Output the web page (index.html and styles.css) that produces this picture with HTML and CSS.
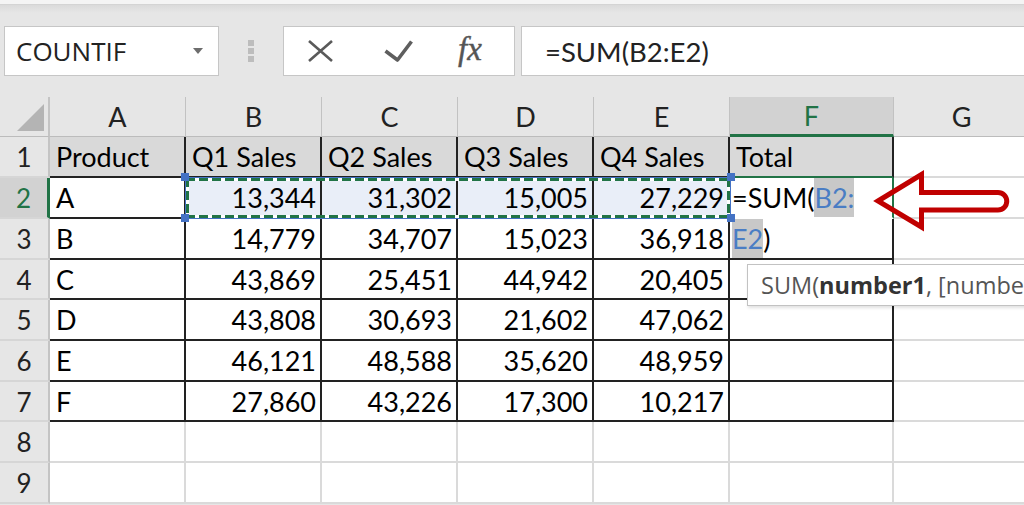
FILE: index.html
```html
<!DOCTYPE html>
<html>
<head>
<meta charset="utf-8">
<link rel="stylesheet" href="styles.css">
</head>
<body>
<div class="chrome">
  <div class="topstrip"></div>
  <div class="shade"></div>
  <div class="fbar">
    <div class="namebox"><span class="name">COUNTIF</span><span class="caret"></span></div>
    <div class="grip"><i></i><i></i><i></i></div>
    <div class="btns">
      <svg class="ico-x" width="25" height="22" viewBox="0 0 25 22"><path d="M1 1 L24 21 M24 1 L1 21" stroke="#5a5a5a" stroke-width="2.6" fill="none"/></svg>
      <svg class="ico-ok" width="29" height="22" viewBox="0 0 29 22"><path d="M1.5 11 L13.5 20 L27.5 1.5" stroke="#5e5e5e" stroke-width="3.6" fill="none" stroke-linejoin="round"/></svg>
      <span class="fx">fx</span>
    </div>
    <div class="formula">=SUM(B2:E2)</div>
  </div>
</div>
<div class="sheet">
  <div class="corner"><span class="tri"></span></div>
  <div class="ch">A</div><div class="ch">B</div><div class="ch">C</div><div class="ch">D</div><div class="ch">E</div><div class="ch sel">F</div><div class="ch">G</div>

  <div class="rh">1</div>
  <div class="c t hd">Product</div><div class="c t hd">Q1 Sales</div><div class="c t hd">Q2 Sales</div><div class="c t hd">Q3 Sales</div><div class="c t hd">Q4 Sales</div><div class="c t hd f1">Total</div><div class="c"></div>

  <div class="rh rsel">2</div>
  <div class="c t">A</div><div class="c t n insel">13,344</div><div class="c t n insel">31,302</div><div class="c t n insel">15,005</div><div class="c t n insel">27,229</div><div class="c t edit f2">=SUM(<span class="ref">B2:</span></div><div class="c"></div>

  <div class="rh">3</div>
  <div class="c t">B</div><div class="c t n">14,779</div><div class="c t n">34,707</div><div class="c t n">15,023</div><div class="c t n">36,918</div><div class="c t edit"><span class="ref">E2</span>)</div><div class="c"></div>

  <div class="rh">4</div>
  <div class="c t">C</div><div class="c t n">43,869</div><div class="c t n">25,451</div><div class="c t n">44,942</div><div class="c t n">20,405</div><div class="c t"></div><div class="c"></div>

  <div class="rh">5</div>
  <div class="c t">D</div><div class="c t n">43,808</div><div class="c t n">30,693</div><div class="c t n">21,602</div><div class="c t n">47,062</div><div class="c t"></div><div class="c"></div>

  <div class="rh">6</div>
  <div class="c t">E</div><div class="c t n">46,121</div><div class="c t n">48,588</div><div class="c t n">35,620</div><div class="c t n">48,959</div><div class="c t"></div><div class="c"></div>

  <div class="rh">7</div>
  <div class="c t">F</div><div class="c t n">27,860</div><div class="c t n">43,226</div><div class="c t n">17,300</div><div class="c t n">10,217</div><div class="c t"></div><div class="c"></div>

  <div class="rh">8</div>
  <div class="c"></div><div class="c"></div><div class="c"></div><div class="c"></div><div class="c"></div><div class="c"></div><div class="c"></div>

  <div class="rh">9</div>
  <div class="c"></div><div class="c"></div><div class="c"></div><div class="c"></div><div class="c"></div><div class="c"></div><div class="c"></div>

  <div class="range">
    <div class="ants"></div>
    <span class="h tl"></span><span class="h tr"></span><span class="h bl"></span><span class="h br"></span>
  </div>
</div>

<div class="tip">SUM(<b>number1</b>, [number2], ...)</div>

<svg class="arrow" width="1024" height="505" viewBox="0 0 1024 505">
  <path d="M878 201 L921.5 174.5 L921.5 192.5 L998 192.5 A8.75 8.75 0 0 1 998 210 L921.5 210 L921.5 227 Z" fill="none" stroke="#c00000" stroke-width="5" stroke-linejoin="miter"/>
</svg>
</body>
</html>
```

FILE: styles.css
```css
* { box-sizing: border-box; margin: 0; padding: 0; }
html, body { width: 1024px; height: 505px; overflow: hidden; }
body { background: #e6e6e6; font-family: "Lato", "Liberation Sans", sans-serif; color: #000; position: relative; }

.chrome { height: 97px; display: flex; flex-direction: column; }
.topstrip { height: 5px; background: #f4f4f4; border-bottom: 1px solid #d4d4d4; }
.shade { height: 8px; background: linear-gradient(#dadada, #e6e6e6); }
.fbar { display: flex; height: 50px; margin-top: 13px; }

.namebox { margin-left: 4px; width: 215px; background: #fff; border: 1px solid #c6c6c6; display: flex; align-items: center; padding-left: 11px; }
.name { font-family: "Open Sans", "Noto Sans", sans-serif; font-size: 26px; color: #222; }
.caret { margin-left: auto; margin-right: 15px; width: 0; height: 0; border-left: 5px solid transparent; border-right: 5px solid transparent; border-top: 6px solid #6d6d6d; }

.grip { margin-left: 29px; width: 6px; display: flex; flex-direction: column; justify-content: center; gap: 2px; }
.grip i { display: block; width: 6px; height: 6px; background: #bdbdbd; }

.btns { margin-left: 29px; width: 232px; background: #fff; border: 1px solid #c6c6c6; display: flex; align-items: center; padding-left: 24px; }
.ico-ok { margin-left: 51px; }
.fx { margin-left: 45px; font-family: "Liberation Serif", serif; font-style: italic; font-size: 33px; color: #555; line-height: 1; margin-top: -3px; -webkit-text-stroke: 0.4px #555; }

.formula { margin-left: 6px; flex: 1; margin-right: -20px; background: #fff; border: 1px solid #c6c6c6; display: flex; align-items: center; padding-left: 23px; font-size: 27.5px; color: #222; }

.sheet { display: grid; grid-template-columns: 50px 136px 136px 136px 136px 136px 164px 136px; grid-template-rows: 40px 41px 41px 41px 40px 41px 41px 40px 41px 41px; width: 1030px; position: relative; }

.corner { background: #e6e6e6; border-right: 2px solid #c4c4c4; border-bottom: 1px solid #bcbcbc; display: flex; justify-content: flex-end; align-items: flex-end; padding: 0 4px 5px 0; }
.tri { width: 27px; height: 27px; background: #b4b4b4; clip-path: polygon(100% 0, 100% 100%, 0 100%); }

.ch { background: #e6e6e6; border-right: 1px solid #c2c2c2; border-bottom: 1px solid #bcbcbc; text-align: center; font-size: 27px; line-height: 39px; color: #222; }
.ch.sel { background: #d2d2d2; color: #217346; border-bottom: 3px solid #217346; line-height: 37px; }

.rh { background: #e6e6e6; border-right: 2px solid #c4c4c4; border-bottom: 2px solid #d6d6d6; text-align: center; font-size: 26px; line-height: 38px; padding-top: 1px; color: #222; }
.rh.rsel { background: #d2d2d2; color: #217346; border-right: 3px solid #217346; }

.c { background: #fff; border-right: 2px solid #dadada; border-bottom: 2px solid #dadada; font-size: 27px; line-height: 38px; padding: 1px 5px 0 6px; white-space: nowrap; overflow: hidden; }
.c.t { border-right-color: #222; border-bottom-color: #222; }
.c.hd { background: #d9d9d9; }
.c.n { text-align: right; padding-right: 4px; }
.c.insel { background: #e9eef8; }
.c.f1 { border-bottom-color: #217346; }
.c.edit { padding: 0 0 0 2px; line-height: 39px; overflow: visible; }
.c.f2 { border-right-color: #217346; border-bottom-color: #fff; }
.ref { display: inline-block; background: #c8c8c8; color: #4a7dc4; height: 39px; line-height: 39px; vertical-align: top; }

.range { position: absolute; grid-row: 3 / 4; grid-column: 3 / 7; top: -1px; left: -1px; right: -1px; bottom: 0; border: 1px solid #4472c4; }
.ants { position: absolute; inset: 0;
  background:
    repeating-linear-gradient(90deg, #217346 0 9px, #fff 9px 13px) left top / 100% 3px no-repeat,
    repeating-linear-gradient(90deg, #217346 0 9px, #fff 9px 13px) left bottom / 100% 3px no-repeat,
    repeating-linear-gradient(180deg, #217346 0 9px, #fff 9px 13px) left top / 3px 100% no-repeat,
    repeating-linear-gradient(180deg, #217346 0 9px, #fff 9px 13px) right top / 3px 100% no-repeat; }
.h { position: absolute; width: 8px; height: 8px; background: #4472c4; }
.h.tl { left: -5px; top: -5px; }
.h.tr { right: -5px; top: -5px; }
.h.bl { left: -5px; bottom: -4px; }
.h.br { right: -5px; bottom: -4px; }

.tip { position: absolute; left: 747px; top: 264px; width: 420px; height: 42px; background: #fff; border: 1px solid #c2c2c2; box-shadow: 1px 2px 3px rgba(0,0,0,0.12); font-family: "Open Sans", "Noto Sans", sans-serif; font-size: 23.5px; color: #555; line-height: 40px; padding-left: 13px; white-space: nowrap; }
.tip b { color: #333; font-weight: 700; }

.arrow { position: absolute; left: 0; top: 0; pointer-events: none; }
```
